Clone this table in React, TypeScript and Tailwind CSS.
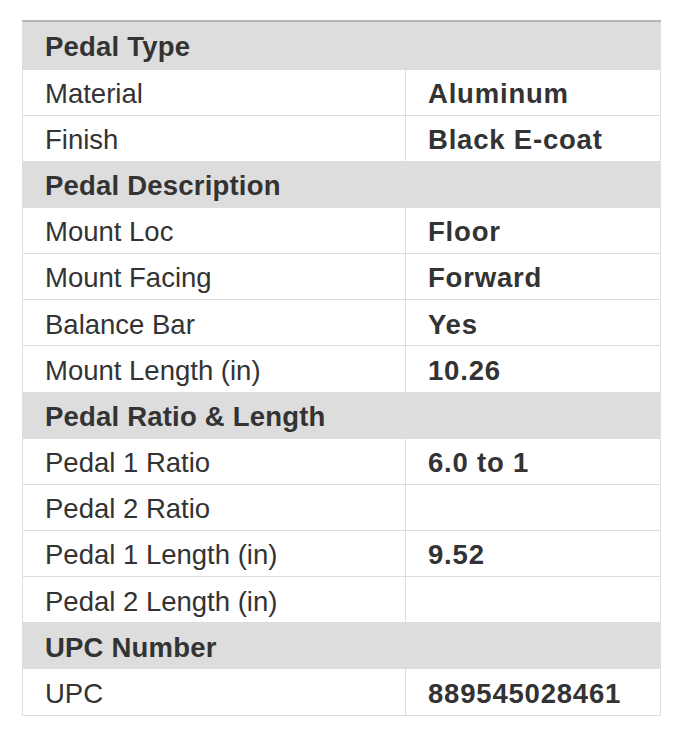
const sections: { title: string; rows: [string, string][] }[] = [
  {
    title: "Pedal Type",
    rows: [
      ["Material", "Aluminum"],
      ["Finish", "Black E-coat"],
    ],
  },
  {
    title: "Pedal Description",
    rows: [
      ["Mount Loc", "Floor"],
      ["Mount Facing", "Forward"],
      ["Balance Bar", "Yes"],
      ["Mount Length (in)", "10.26"],
    ],
  },
  {
    title: "Pedal Ratio & Length",
    rows: [
      ["Pedal 1 Ratio", "6.0 to 1"],
      ["Pedal 2 Ratio", ""],
      ["Pedal 1 Length (in)", "9.52"],
      ["Pedal 2 Length (in)", ""],
    ],
  },
  {
    title: "UPC Number",
    rows: [["UPC", "889545028461"]],
  },
];

export default function App() {
  return (
    <div className="min-h-[735px] bg-white pt-[20px] pl-[22px] font-['Liberation_Sans',Arial,sans-serif] text-[#333]">
      <table className="w-[639px] border-collapse border border-[#dddddd] border-t-2 border-t-[#b5b5b5] text-[27.5px] leading-none">
        <tbody>
          {sections.map((s, i) => (
            <>
              <tr
                key={s.title}
                className={`${i === 0 ? "h-[48px]" : "h-[46px]"} bg-[#dddddd]`}
              >
                <th
                  colSpan={2}
                  className="px-[22px] pt-[3px] text-left font-bold tracking-[0.2px]"
                >
                  {s.title}
                </th>
              </tr>
              {s.rows.map(([label, value]) => (
                <tr key={label} className="h-[46.2px] bg-white">
                  <td className="w-[383px] border border-[#dddddd] px-[22px] pt-[3px]">
                    {label}
                  </td>
                  <td className="border border-[#dddddd] px-[22px] pt-[3px] font-bold tracking-[0.8px]">
                    {value}
                  </td>
                </tr>
              ))}
            </>
          ))}
        </tbody>
      </table>
    </div>
  );
}
